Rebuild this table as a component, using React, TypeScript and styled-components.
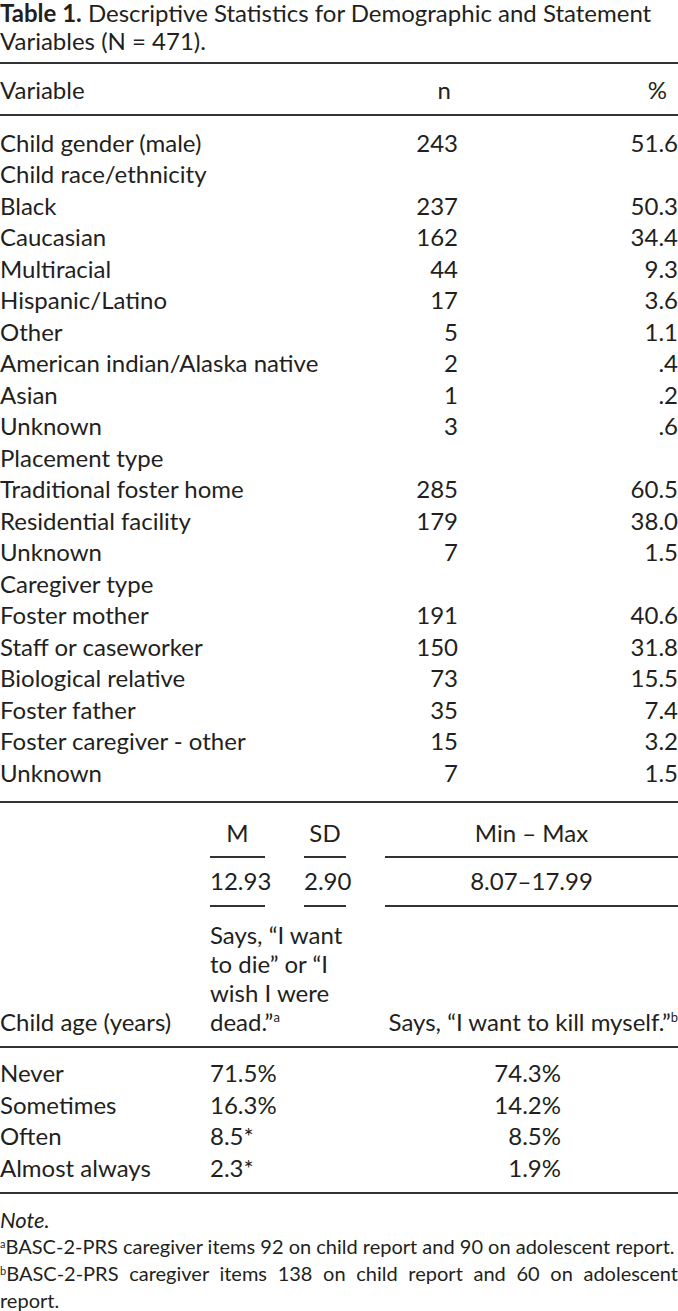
import React from 'react';
import styled, { createGlobalStyle } from 'styled-components';

const GlobalStyle = createGlobalStyle`
  body {
    margin: 0;
    background: #ffffff;
  }
`;

const Page = styled.div`
  width: 678px;
  color: #231f20;
  font-family: Lato, "Open Sans", sans-serif;
  font-size: 24px;
`;

const Caption = styled.div`
  line-height: 28px;
  margin-top: -1px;
  padding-bottom: 7px;
  border-bottom: 2px solid #333;
  white-space: nowrap;
`;

const CaptionLabel = styled.span`
  font-weight: 700;
`;

const Rule = styled.div`
  height: 2px;
  background: #333;
`;

const Grid = styled.div`
  display: grid;
  grid-template-columns: 1fr 60px 220px;
  line-height: 31.5px;
`;

const HeadGrid = styled(Grid)`
  padding: 10px 0 8px;
`;

const BodyGrid = styled(Grid)`
  padding: 11px 0 13px;
`;

const Cell = styled.div<{ $align?: 'left' | 'right' | 'center'; $pad?: number }>`
  text-align: ${(p) => p.$align ?? 'left'};
  padding-right: ${(p) => p.$pad ?? 0}px;
  white-space: nowrap;
`;

const StatGrid = styled.div`
  display: grid;
  grid-template-columns: 171px 55px 42px 1fr;
  column-gap: 39px;
`;

const StatCell = styled.div`
  text-align: center;
  line-height: 31.5px;
  white-space: nowrap;
  border-bottom: 2px solid #333;
`;

const Blank = styled.div``;

const HeadRow = styled(StatGrid)`
  padding-top: 14px;
  & > ${StatCell} {
    padding-bottom: 7px;
  }
`;

const ValueRow = styled(StatGrid)`
  & > ${StatCell} {
    padding: 7px 0 9px;
  }
`;

const LabelRow = styled(StatGrid)`
  align-items: end;
  padding: 13px 0 10px;
  border-bottom: 2px solid #333;
`;

const Wrapped = styled.div`
  grid-column: 2 / 4;
  line-height: 29px;
  white-space: nowrap;
`;

const Plain = styled.div<{ $align?: 'left' | 'right' }>`
  line-height: 29px;
  white-space: nowrap;
  text-align: ${(p) => p.$align ?? 'left'};
`;

const FreqGrid = styled.div`
  display: grid;
  grid-template-columns: 210px 175px 176px 1fr;
  line-height: 31.5px;
  padding: 9px 0 9px;
  border-bottom: 2px solid #333;
`;

const Notes = styled.div`
  padding-top: 12px;
  font-size: 20px;
  line-height: 27px;
`;

const NoteTitle = styled.div`
  font-style: italic;
  font-size: 22px;
`;

const Footnote = styled.div`
  text-align: justify;
`;

const Sup = styled.sup<{ $small?: boolean }>`
  font-size: ${(p) => (p.$small ? 11 : 13)}px;
  line-height: 1;
  vertical-align: ${(p) => (p.$small ? 6 : 9)}px;
`;

type Item = { label: string; n?: number; pct?: string };

const items: Item[] = [
  { label: 'Child gender (male)', n: 243, pct: '51.6' },
  { label: 'Child race/ethnicity' },
  { label: 'Black', n: 237, pct: '50.3' },
  { label: 'Caucasian', n: 162, pct: '34.4' },
  { label: 'Multiracial', n: 44, pct: '9.3' },
  { label: 'Hispanic/Latino', n: 17, pct: '3.6' },
  { label: 'Other', n: 5, pct: '1.1' },
  { label: 'American indian/Alaska native', n: 2, pct: '.4' },
  { label: 'Asian', n: 1, pct: '.2' },
  { label: 'Unknown', n: 3, pct: '.6' },
  { label: 'Placement type' },
  { label: 'Traditional foster home', n: 285, pct: '60.5' },
  { label: 'Residential facility', n: 179, pct: '38.0' },
  { label: 'Unknown', n: 7, pct: '1.5' },
  { label: 'Caregiver type' },
  { label: 'Foster mother', n: 191, pct: '40.6' },
  { label: 'Staff or caseworker', n: 150, pct: '31.8' },
  { label: 'Biological relative', n: 73, pct: '15.5' },
  { label: 'Foster father', n: 35, pct: '7.4' },
  { label: 'Foster caregiver - other', n: 15, pct: '3.2' },
  { label: 'Unknown', n: 7, pct: '1.5' },
];

const freqs = [
  { label: 'Never', die: '71.5%', kill: '74.3%' },
  { label: 'Sometimes', die: '16.3%', kill: '14.2%' },
  { label: 'Often', die: '8.5*', kill: '8.5%' },
  { label: 'Almost always', die: '2.3*', kill: '1.9%' },
];

function App() {
  return (
    <Page>
      <GlobalStyle />
      <Caption>
        <CaptionLabel>Table 1.</CaptionLabel> Descriptive Statistics for Demographic and Statement
        <br />
        Variables (N = 471).
      </Caption>

      <HeadGrid>
        <Cell>Variable</Cell>
        <Cell $align="right" $pad={7}>n</Cell>
        <Cell $align="right" $pad={11}>%</Cell>
      </HeadGrid>
      <Rule />

      <BodyGrid>
        {items.map((it, i) => (
          <React.Fragment key={i}>
            <Cell>{it.label}</Cell>
            <Cell $align="right">{it.n ?? ''}</Cell>
            <Cell $align="right">{it.pct ?? ''}</Cell>
          </React.Fragment>
        ))}
      </BodyGrid>
      <Rule />

      <HeadRow>
        <Blank />
        <StatCell>M</StatCell>
        <StatCell>SD</StatCell>
        <StatCell>Min – Max</StatCell>
      </HeadRow>
      <ValueRow>
        <Blank />
        <StatCell>12.93</StatCell>
        <StatCell>2.90</StatCell>
        <StatCell>8.07–17.99</StatCell>
      </ValueRow>

      <LabelRow>
        <Plain>Child age (years)</Plain>
        <Wrapped>
          Says, “I want
          <br />
          to die” or “I
          <br />
          wish I were
          <br />
          dead.”<Sup>a</Sup>
        </Wrapped>
        <Plain $align="right">
          Says, “I want to kill myself.”<Sup>b</Sup>
        </Plain>
      </LabelRow>

      <FreqGrid>
        {freqs.map((f) => (
          <React.Fragment key={f.label}>
            <Cell>{f.label}</Cell>
            <Cell>{f.die}</Cell>
            <Cell $align="right">{f.kill}</Cell>
            <Blank />
          </React.Fragment>
        ))}
      </FreqGrid>

      <Notes>
        <NoteTitle>Note.</NoteTitle>
        <Footnote>
          <Sup $small>a</Sup>BASC-2-PRS caregiver items 92 on child report and 90 on adolescent report.
        </Footnote>
        <Footnote>
          <Sup $small>b</Sup>BASC-2-PRS caregiver items 138 on child report and 60 on adolescent report.
        </Footnote>
      </Notes>
    </Page>
  );
}

export default App;
